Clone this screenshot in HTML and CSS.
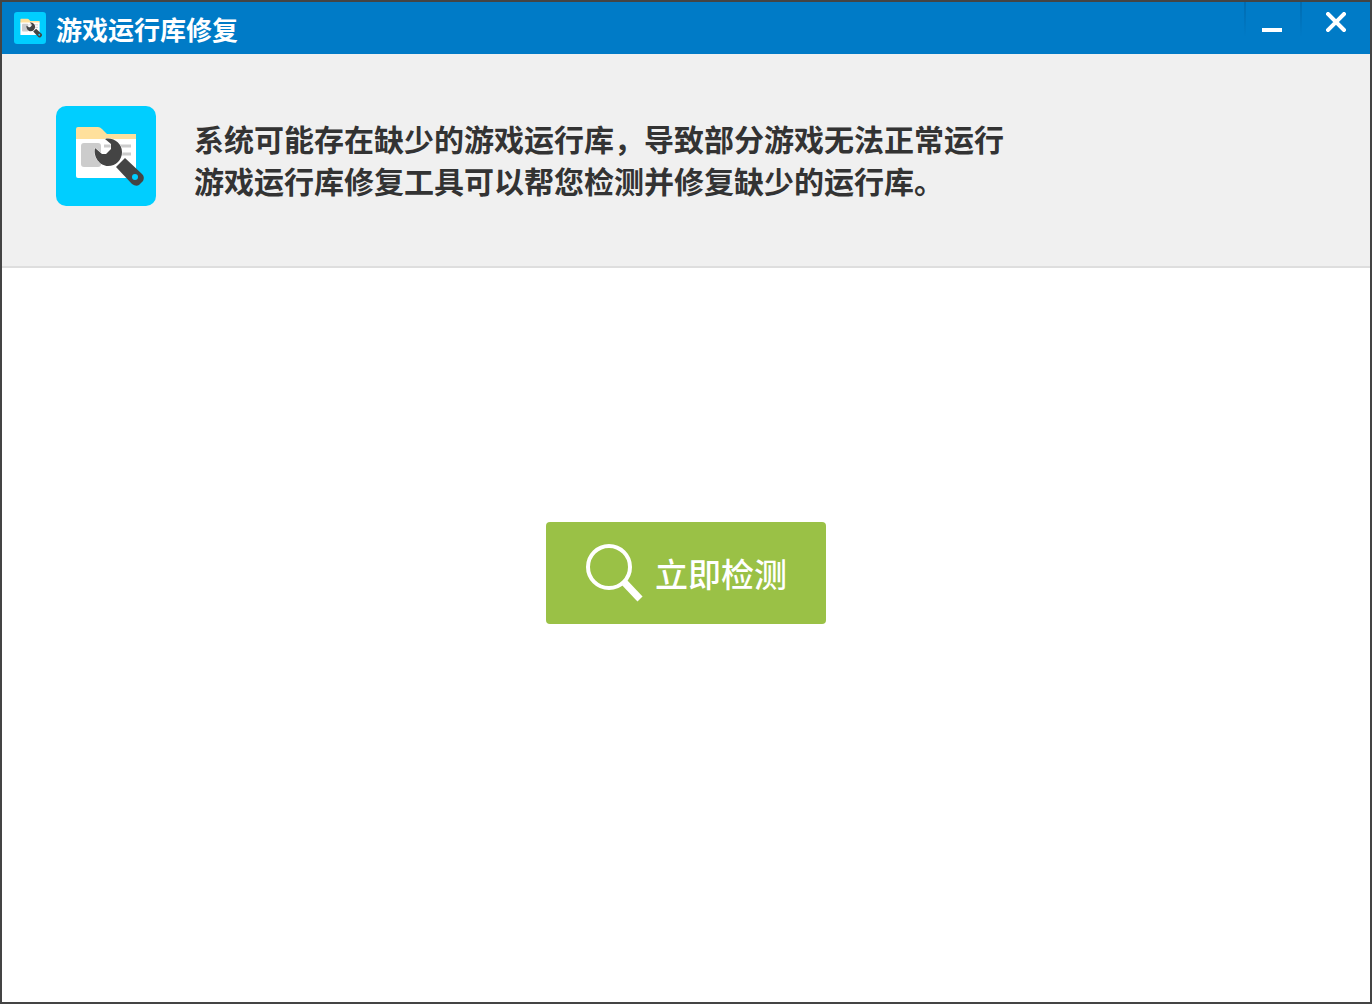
FILE: index.html
```html
<!DOCTYPE html>
<html lang="zh-CN">
<head>
<meta charset="utf-8">
<meta name="viewport" content="width=device-width, initial-scale=1">
<title>游戏运行库修复</title>
<link rel="stylesheet" href="styles.css">
</head>
<body>
<svg class="sprite" aria-hidden="true">
  <symbol id="app-icon" viewBox="0 0 100 100">
    <rect width="100" height="100" rx="10" fill="#00ceff"/>
    <path d="M20 23Q20 21 22 21H42Q44 21 46 23L51 28H80V36H20Z" fill="#ffe09c"/>
    <path d="M20 33H80V72H22Q20 72 20 70Z" fill="#fff"/>
    <rect x="25" y="37" width="20" height="24" rx="3" fill="#ccc"/>
    <path d="M48 40H75M60 48H75" stroke="#ccc" stroke-width="3"/>
    <path d="M49 33C57 31 66 37 66 46C66 54 60 60 52 60C44 60 37 51 39 42L46 48H50L55 43V38Z" fill="#444" stroke="#fff" stroke-width="1" paint-order="stroke"/>
    <path d="M69 52L86 68Q89 71 87 75L83 79Q80 81 76 78L60 61Z" fill="#444"/>
    <circle cx="79" cy="71" r="3" fill="#00ceff"/>
  </symbol>
</svg>
<div class="window">
  <header class="titlebar">
    <svg class="titlebar-icon" aria-hidden="true"><use href="#app-icon"/></svg>
    <h1 class="title">游戏运行库修复</h1>
    <div class="controls">
      <button class="control minimize" type="button" aria-label="最小化">
        <svg width="20" height="20" viewBox="0 0 20 20" aria-hidden="true"><path d="M0 18H20" stroke="#fff" stroke-width="4"/></svg>
      </button>
      <button class="control close" type="button" aria-label="关闭">
        <svg width="20" height="20" viewBox="0 0 20 20" aria-hidden="true"><path d="M2 2L18 18M18 2L2 18" stroke="#fff" stroke-width="4" stroke-linecap="square"/></svg>
      </button>
    </div>
  </header>
  <section class="intro">
    <svg class="intro-icon" aria-hidden="true"><use href="#app-icon"/></svg>
    <p class="intro-text">系统可能存在缺少的游戏运行库，导致部分游戏无法正常运行<br>游戏运行库修复工具可以帮您检测并修复缺少的运行库。</p>
  </section>
  <main class="content">
    <button class="scan" type="button">
      <svg class="scan-icon" viewBox="0 0 58 58" aria-hidden="true">
        <circle cx="24" cy="23" r="21" fill="none" stroke="#fff" stroke-width="4"/>
        <path d="M38 37L55 55" stroke="#fff" stroke-width="7"/>
      </svg>
      <span>立即检测</span>
    </button>
  </main>
</div>
</body>
</html>
```
FILE: styles.css
```css
* {
  box-sizing: border-box;
}

body {
  margin: 0;
  font-family: "Noto Sans CJK SC", sans-serif;
}

button {
  border: 0;
  margin: 0;
  font: inherit;
  color: #fff;
  cursor: pointer;
}

.sprite {
  position: absolute;
  width: 0;
  height: 0;
}

.window {
  display: flex;
  flex-direction: column;
  min-height: 100vh;
  border: 2px solid #444;
  background: #fff;
}

.titlebar {
  display: flex;
  align-items: center;
  height: 52px;
  padding-left: 12px;
  background: #007bc7;
  color: #fff;
}

.titlebar-icon {
  width: 32px;
  height: 32px;
  margin-right: 10px;
}

.title {
  margin: 0;
  padding-top: 2px;
  font-size: 26px;
  line-height: 36px;
  font-weight: 700;
}

.controls {
  display: flex;
  align-self: flex-start;
  margin-left: auto;
}

.control {
  display: flex;
  justify-content: center;
  width: 56px;
  height: 34px;
  padding: 10px 2px 0 0;
  border-left: 2px solid;
  border-image: linear-gradient(#006bb0, #007bc7) 1;
  background: transparent;
}

.close {
  width: 70px;
  padding-right: 0;
}

.intro {
  display: flex;
  align-items: flex-start;
  gap: 38px;
  padding: 52px 54px 60px;
  border-bottom: 2px solid #dedede;
  background: #f0f0f0;
}

.intro-icon {
  flex: none;
  width: 100px;
  height: 100px;
}

.intro-text {
  margin: 0;
  padding-top: 11px;
  font-size: 30px;
  line-height: 42px;
  font-weight: 700;
  color: #333;
}

.content {
  display: flex;
  flex: 1;
  justify-content: center;
  align-items: flex-start;
  padding: 254px 24px 24px;
}

.scan {
  display: flex;
  justify-content: center;
  align-items: center;
  gap: 12px;
  width: 280px;
  height: 102px;
  padding: 0;
  border-radius: 4px;
  background: #9ac146;
  font-size: 33px;
  font-weight: 500;
  line-height: 44px;
}

.scan-icon {
  width: 58px;
  height: 58px;
}
```
